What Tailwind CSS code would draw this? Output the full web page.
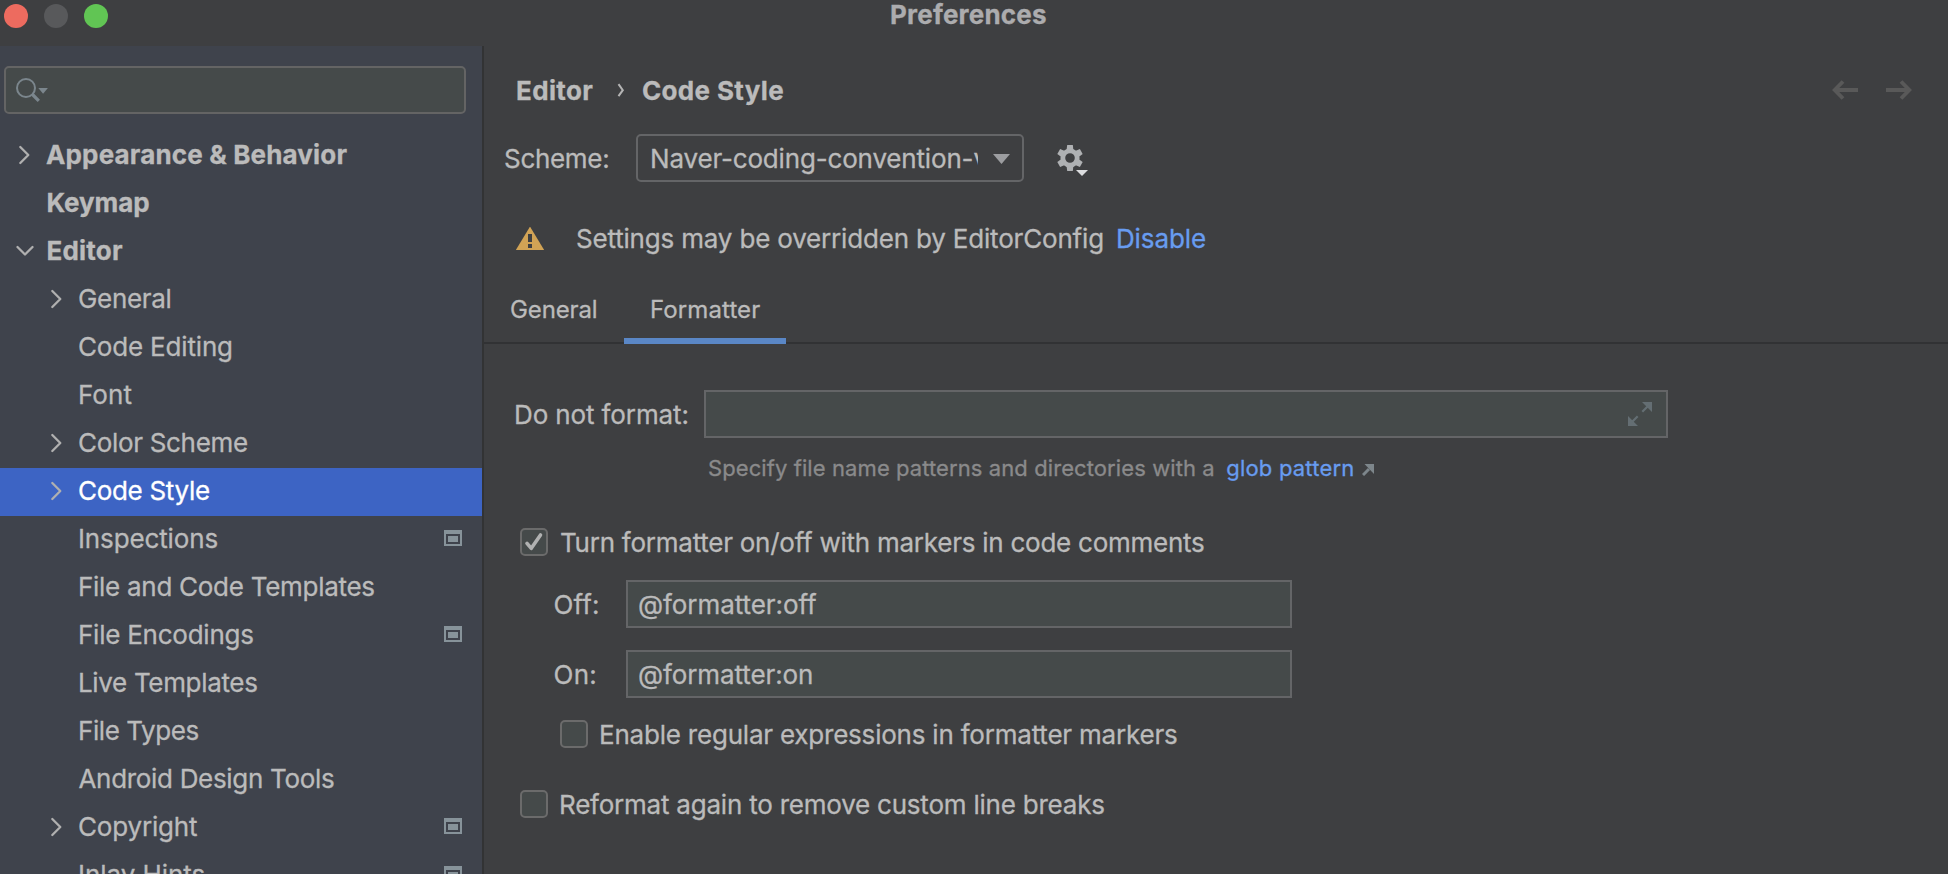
<!DOCTYPE html>
<html lang="en">
<head>
<meta charset="utf-8">
<title>Preferences</title>
<script src="https://cdn.jsdelivr.net/npm/@tailwindcss/browser@4"></script>
</head>
<body class="bg-[#3e3f41]">
<svg class="hidden">
  <symbol id="right" viewBox="0 0 18 24"><path d="M4.300 4 12.300 12l-8 8" fill="none" stroke="currentColor" stroke-width="2.300" stroke-linecap="round" stroke-linejoin="round"/></symbol>
  <symbol id="project" viewBox="0 0 18 16"><path fill-rule="evenodd" fill="currentColor" d="M0 0h18v16H0zM2 4v10h14V4zM4 6h10v6H4z"/></symbol>
</svg>
<div class="flex h-[874px] w-[1948px] flex-col overflow-hidden bg-[#3e3f41] font-['Inter','Liberation_Sans',sans-serif] text-[26px] leading-[31px] whitespace-nowrap text-[#bbbbbb] [-webkit-text-stroke:0.3px]">
  <header class="relative flex h-[46px] shrink-0 gap-4 pt-1 pl-1">
    <span class="size-6 rounded-full bg-[#ed6b5f]"></span>
    <span class="size-6 rounded-full bg-[#58595b]"></span>
    <span class="size-6 rounded-full bg-[#61c554]"></span>
    <h1 class="absolute -top-px left-[890px] font-bold tracking-[0.2px] text-[#acacae]">Preferences</h1>
  </header>

  <div class="flex min-h-0 flex-1">
    <aside class="w-[484px] shrink-0 overflow-hidden border-r-2 border-[#323334] bg-[#3f434c]">
      <div class="mt-5 ml-1 flex h-12 w-[462px] rounded-[5px] border-2 border-[#646464] bg-[#454a4a]">
        <svg class="mt-2 ml-2 h-7 w-10" viewBox="0 0 40 28" fill="none" stroke="#7b868d"><circle cx="12" cy="12" r="9" stroke-width="2"/><path d="m18.500 18.500 6.300 6.300" stroke-width="3.200"/><path d="M24.300 12h9.600l-4.800 5.800z" fill="#7b868d" stroke="none"/></svg>
      </div>
      <ul class="mt-[18px]">
        <li class="flex h-12 pt-[7px] pl-4 font-bold"><svg class="mt-1 h-6 w-[18px] text-[#b0b0b0]"><use href="#right"/></svg><span class="ml-3 tracking-[0.16px]">Appearance &amp; Behavior</span></li>
        <li class="flex h-12 pt-[7px] pl-[46.500px] font-bold"><span class="tracking-[-0.1px]">Keymap</span></li>
        <li class="flex h-12 pt-[7px] pl-4 font-bold"><svg class="mt-1 h-6 w-[18px]" viewBox="0 0 18 24"><path d="m1.500 8 7.500 7.500 7.500-7.500" fill="none" stroke="#b0b0b0" stroke-width="2.300" stroke-linecap="round" stroke-linejoin="round"/></svg><span class="ml-[12.500px] tracking-[0.2px]">Editor</span></li>
        <li class="flex h-12 pt-[7px] pl-12"><svg class="mt-1 h-6 w-[18px] text-[#b0b0b0]"><use href="#right"/></svg><span class="ml-3 tracking-[-0.33px]">General</span></li>
        <li class="flex h-12 pt-[7px] pl-[78px]"><span class="tracking-[-0.17px]">Code Editing</span></li>
        <li class="flex h-12 pt-[7px] pl-[78px]"><span class="tracking-[0.05px]">Font</span></li>
        <li class="flex h-12 pt-[7px] pl-12"><svg class="mt-1 h-6 w-[18px] text-[#b0b0b0]"><use href="#right"/></svg><span class="ml-3 tracking-[-0.31px]">Color Scheme</span></li>
        <li class="flex h-12 bg-[#3d64c4] pt-[7px] pl-12 text-white"><svg class="mt-1 h-6 w-[18px] text-[#b0b0b0]"><use href="#right"/></svg><span class="ml-3 tracking-[-0.3px]">Code Style</span></li>
        <li class="flex h-12 pt-[7px] pr-5 pl-[78px]"><span class="tracking-[-0.13px]">Inspections</span><svg class="mt-[7px] ml-auto h-4 w-[18px] text-[#87939a]"><use href="#project"/></svg></li>
        <li class="flex h-12 pt-[7px] pl-[78px]"><span class="tracking-[-0.28px]">File and Code Templates</span></li>
        <li class="flex h-12 pt-[7px] pr-5 pl-[78px]"><span class="tracking-[-0.24px]">File Encodings</span><svg class="mt-[7px] ml-auto h-4 w-[18px] text-[#87939a]"><use href="#project"/></svg></li>
        <li class="flex h-12 pt-[7px] pl-[78px]"><span class="tracking-[-0.33px]">Live Templates</span></li>
        <li class="flex h-12 pt-[7px] pl-[78px]"><span class="tracking-[-0.42px]">File Types</span></li>
        <li class="flex h-12 pt-[7px] pl-[78.500px]"><span class="tracking-[-0.32px]">Android Design Tools</span></li>
        <li class="flex h-12 pt-[7px] pr-5 pl-12"><svg class="mt-1 h-6 w-[18px] text-[#b0b0b0]"><use href="#right"/></svg><span class="ml-3 tracking-[-0.18px]">Copyright</span><svg class="mt-[7px] ml-auto h-4 w-[18px] text-[#87939a]"><use href="#project"/></svg></li>
        <li class="flex h-12 pt-[7px] pr-5 pl-[78px]"><span class="tracking-[-0.05px]">Inlay Hints</span><svg class="mt-[7px] ml-auto h-4 w-[18px] text-[#87939a]"><use href="#project"/></svg></li>
      </ul>
    </aside>

    <main class="min-w-0 flex-1">
      <div class="flex h-[60px] items-end pr-9 pl-8 font-bold">
        <span class="w-[101px] tracking-[0.35px]">Editor</span>
        <svg class="mb-[7px] h-[18px] w-2" viewBox="0 0 8 18"><path d="m1.500 3.200 4.300 6-4.300 6" fill="none" stroke="#b4b4b4" stroke-width="2"/></svg>
        <span class="ml-[17px] tracking-[0.34px]">Code Style</span>
        <svg class="mb-[6px] ml-auto h-5 w-20" viewBox="0 0 80 20" fill="none" stroke="#595959" stroke-width="3.800"><path d="M26 10H3M11 1.500 2.700 10l8.300 8.500M54 10h23M69 1.500l8.300 8.500-8.300 8.500"/></svg>
      </div>

      <div class="mt-7 flex h-12 pl-5">
        <span class="mt-[9px] w-[132px] tracking-[-0.3px]">Scheme:</span>
        <div class="flex h-12 w-[388px] rounded-[5px] border-2 border-[#646567] pl-3">
          <span class="mt-[7px] w-[328px] overflow-hidden tracking-[-0.17px]">Naver-coding-convention-v</span>
          <svg class="mt-[18px] ml-[15px] h-[10px] w-[17px]" viewBox="0 0 17 10"><path d="M0 0h17L8.500 10z" fill="#9c9da0"/></svg>
        </div>
        <svg class="mt-[9px] ml-8 h-9 w-9" viewBox="0 0 36 36">
          <g fill="#afb1b3" transform="translate(14 15)">
            <circle r="7.200" fill="none" stroke="#afb1b3" stroke-width="4.800"/>
            <path id="t" d="M-3.400-8-2.800-13h5.600l.6 5z"/>
            <use href="#t" transform="rotate(60)"/><use href="#t" transform="rotate(120)"/><use href="#t" transform="rotate(180)"/><use href="#t" transform="rotate(240)"/><use href="#t" transform="rotate(300)"/>
          </g>
          <path d="M20 27h12l-6 6z" fill="#dcdddf"/>
        </svg>
      </div>

      <div class="mt-[41px] flex h-[31px] pl-8">
        <svg class="mt-1 h-6 w-7" viewBox="0 0 28 24"><path d="M14-.4 28.200 23H-.2z" fill="#d1a355"/><path d="M12 7h4v8h-4zM12 17h4v4h-4z" fill="#3e3f41"/></svg>
        <span class="ml-8 tracking-[-0.18px]">Settings may be overridden by EditorConfig</span>
        <span class="ml-3 tracking-[-0.1px] text-[#689cf0]">Disable</span>
      </div>

      <nav class="mt-7 flex h-[62px] border-b-2 border-[#313234] text-[24px] leading-[29px]">
        <div class="h-[62px] w-[140px] pt-[13px] pl-[26px] tracking-[-0.12px]">General</div>
        <div class="h-[62px] w-[162px] border-b-6 border-[#5a87c6] pt-[13px] pl-[26px] tracking-[0.1px]">Formatter</div>
      </nav>

      <div class="mt-[46px] flex pl-[30px]">
        <span class="mt-[9px] w-[190px] tracking-[-0.12px]">Do not format:</span>
        <div class="h-12 w-[964px] border-2 border-[#646567] bg-[#454a4a]">
          <svg class="mt-[10px] mr-[14px] ml-auto h-6 w-6" viewBox="0 0 24 24" fill="#646e73" stroke="#646e73"><path stroke="none" d="M14 0h10v10zM0 14v10h10z"/><path stroke-width="2.200" d="m14.300 9.700 6-6M3.700 20.300l6-6"/></svg>
        </div>
      </div>
      <div class="mt-[17px] flex h-[26px] pl-6 text-[22px] leading-[26px] text-[#8a8a8b]">
        <span class="ml-[200px] tracking-[0.09px]">Specify file name patterns and directories with a</span>
        <span class="ml-[11.500px] tracking-[0.2px] text-[#689cf0]">glob pattern</span>
        <svg class="mt-[9px] ml-2 h-3 w-3" viewBox="0 0 12 12"><path d="M2.500 0H12v10z" fill="#7d868b"/><path d="m1 11 6-6" stroke="#7d868b" stroke-width="3"/></svg>
      </div>

      <div class="mt-[46px] flex h-[31px] pl-9">
        <span class="mt-px size-7 rounded-[5px] border-2 border-[#6b6b6b] bg-[#454a4a]"><svg class="size-6" viewBox="0 0 24 24"><path d="m5 13.300 4.300 5L18.500 5" fill="none" stroke="#b0b1b1" stroke-width="3.600" stroke-linecap="round" stroke-linejoin="round"/></svg></span>
        <span class="ml-3 tracking-[-0.25px]">Turn formatter on/off with markers in code comments</span>
      </div>
      <div class="mt-[22px] flex h-12 pl-[69.500px]">
        <span class="mt-[9px] w-[72.500px] tracking-[0.13px]">Off:</span>
        <div class="w-[666px] border-2 border-[#646567] bg-[#454a4a] pt-[7px] pl-[10px] tracking-[-0.07px]">@formatter:off</div>
      </div>
      <div class="mt-[22px] flex h-12 pl-[69.500px]">
        <span class="mt-[9px] w-[72.500px] tracking-[0.3px]">On:</span>
        <div class="w-[666px] border-2 border-[#646567] bg-[#454a4a] pt-[7px] pl-[10px] tracking-[-0.1px]">@formatter:on</div>
      </div>
      <div class="mt-[21px] flex h-[31px] pl-[76px]">
        <span class="mt-px size-7 rounded-[5px] border-2 border-[#6b6b6b] bg-[#454a4a]"></span>
        <span class="ml-[11px] tracking-[-0.21px]">Enable regular expressions in formatter markers</span>
      </div>
      <div class="mt-[39px] flex h-[31px] pl-9">
        <span class="mt-px size-7 rounded-[5px] border-2 border-[#6b6b6b] bg-[#454a4a]"></span>
        <span class="ml-[11px] tracking-[-0.22px]">Reformat again to remove custom line breaks</span>
      </div>
    </main>
  </div>
</div>
</body>
</html>
